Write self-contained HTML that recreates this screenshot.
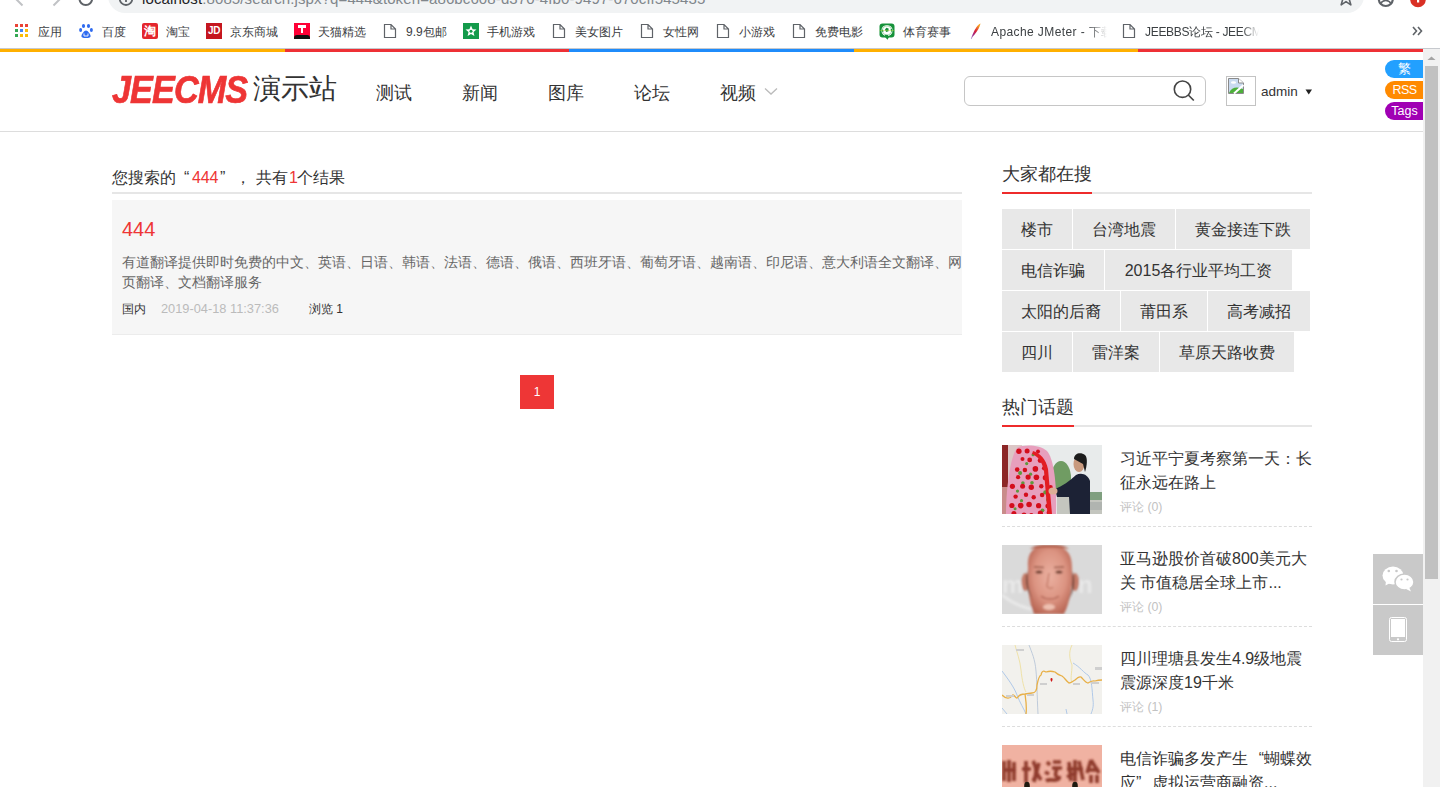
<!DOCTYPE html>
<html><head><meta charset="utf-8">
<style>
*{margin:0;padding:0;box-sizing:border-box}
html,body{width:1440px;height:787px;overflow:hidden;background:#fff}
body{position:relative;font-family:"Liberation Sans",sans-serif;color:#333}
.a{position:absolute;white-space:nowrap}
/* chrome */
#chrome{position:absolute;left:0;top:0;width:1440px;height:49px;background:#fff}
#addr{position:absolute;left:108px;top:-21px;width:1256px;height:34px;background:#f1f3f4;border-radius:17px}
#chromeline{position:absolute;left:0;top:48px;width:1440px;height:1px;background:#c6c9ce}
.bm{position:absolute;top:25px;white-space:nowrap;font-size:12px;line-height:14px;color:#3c4043}
.ic{position:absolute;top:23px;width:16px;height:16px}
/* color bar */
#cbar{position:absolute;left:0;top:49px;width:1423px;height:3px;display:flex}
#cbar div{flex:1}
/* header */
#hdrline{position:absolute;left:0;top:131px;width:1423px;height:1px;background:#ddd}
.nav{position:absolute;top:81px;font-size:18px;line-height:24px;color:#333}
/* scrollbar */
#sb{position:absolute;left:1423px;top:49px;width:17px;height:738px;background:#f1f1f1}
#thumb{position:absolute;left:2px;top:17px;width:13px;height:513px;background:#c1c1c1}
.tab{position:absolute;left:1385px;width:38px;height:18px;border-radius:9px 0 0 9px;color:#fff;font-size:12.5px;padding-left:1px;line-height:19.5px;text-align:center}
/* content */
.tag{position:absolute;height:40px;background:#e8e8e8;font-size:16px;line-height:41px;text-align:center;color:#333}
.news-t{position:absolute;left:1120px;width:194px;font-size:16px;line-height:24px;padding-top:2px;color:#333;white-space:normal}
.news-c{position:absolute;left:1120px;font-size:12.3px;line-height:17px;color:#c2c2c2}
.dash{position:absolute;left:1002px;width:310px;height:1px;border-top:1px dashed #ddd}
.fb{position:absolute;left:1373px;width:50px;height:50px;background:#c9c9c9}
</style></head><body>

<div id="chrome">
  <svg class="a" style="left:0;top:0" width="108" height="13">
    <path d="M15.5 -1.5 L22.5 5.5" stroke="#c0c2c5" stroke-width="2" fill="none"/>
    <path d="M53.5 5.5 L60 -1" stroke="#c0c2c5" stroke-width="2" fill="none"/>
    <circle cx="85.8" cy="-1.2" r="6.3" stroke="#5f6368" stroke-width="2" fill="none"/>
  </svg>
  <div id="addr"></div>
  <svg class="a" style="left:108px;top:0" width="40" height="13">
    <circle cx="18" cy="-1.3" r="6.3" stroke="#5f6368" stroke-width="1.8" fill="none"/>
    <rect x="17.1" y="-3" width="1.8" height="5" fill="#5f6368"/>
  </svg>
  <div class="a" style="left:142px;top:-10px;font-size:15px;line-height:18px;color:#80868b;letter-spacing:0.11px"><span style="color:#202124">localhost</span>:8085/search.jspx?q=444&amp;token=a86bc608-d370-4fb0-9497-670cff545435</div>
  <svg class="a" style="left:1330px;top:0" width="110" height="13">
    <path d="M16.00 -10.00 L18.00 -4.55 L23.80 -4.33 L19.23 -0.75 L20.82 4.83 L16.00 1.60 L11.18 4.83 L12.77 -0.75 L8.20 -4.33 L14.00 -4.55Z" stroke="#5f6368" stroke-width="1.6" fill="none" stroke-linejoin="round"/>
    <circle cx="55.8" cy="-1" r="7" stroke="#5f6368" stroke-width="2.2" fill="none"/><path d="M50.5 3.5 C52 1 54 0.5 55.8 0.5 C57.6 0.5 59.6 1 61.1 3.5" stroke="#5f6368" stroke-width="1.6" fill="none"/>
    <circle cx="88" cy="-0.5" r="7.8" fill="#d93025"/>
    <rect x="87" y="-4" width="2.2" height="6.5" fill="#fff"/>
  </svg>
  <div id="chromeline"></div>
</div>
<!-- bookmarks -->
<svg class="a" style="left:14px;top:23px" width="16" height="16">
 <rect x="1" y="1" width="3" height="3" fill="#ea4335"/><rect x="6" y="1" width="3" height="3" fill="#ea4335"/><rect x="11" y="1" width="3" height="3" fill="#ea4335"/>
 <rect x="1" y="6" width="3" height="3" fill="#34a853"/><rect x="6" y="6" width="3" height="3" fill="#4285f4"/><rect x="11" y="6" width="3" height="3" fill="#fbbc05"/>
 <rect x="1" y="11" width="3" height="3" fill="#34a853"/><rect x="6" y="11" width="3" height="3" fill="#fbbc05"/><rect x="11" y="11" width="3" height="3" fill="#fbbc05"/>
</svg>
<div class="bm" style="left:38px">应用</div>
<svg class="a" style="left:78px;top:23px" width="16" height="16">
 <ellipse cx="5.5" cy="3" rx="1.6" ry="2" fill="#2f6bf0"/><ellipse cx="10.5" cy="3" rx="1.6" ry="2" fill="#2f6bf0"/>
 <ellipse cx="2.6" cy="7" rx="1.5" ry="1.9" fill="#2f6bf0"/><ellipse cx="13.4" cy="7" rx="1.5" ry="1.9" fill="#2f6bf0"/>
 <path d="M8 7.5 C6 7.5 4 11 3.5 12.5 C3 14.5 5 15 8 15 C11 15 13 14.5 12.5 12.5 C12 11 10 7.5 8 7.5Z" fill="#2f6bf0"/>
 <path d="M6 10.5 V13 H10 V10.5" stroke="#fff" stroke-width="0.9" fill="none"/>
</svg>
<div class="bm" style="left:102px">百度</div>
<div class="a" style="left:142px;top:23px;width:16px;height:16px;background:#e4262d;border-radius:2px;color:#fff;font-size:12px;line-height:16px;text-align:center;font-weight:bold">淘</div>
<div class="bm" style="left:166px">淘宝</div>
<div class="a" style="left:206px;top:23px;width:16px;height:16px;background:#c5161f;color:#fff;font-size:10px;line-height:16px;text-align:center;font-weight:bold;letter-spacing:-0.5px">JD</div>
<div class="bm" style="left:230px">京东商城</div>
<div class="a" style="left:294px;top:23px;width:16px;height:16px;background:#ff0036;overflow:hidden">
 <div class="a" style="left:4px;top:2px;width:8px;height:2.5px;background:#fff"></div>
 <div class="a" style="left:6.8px;top:2px;width:2.5px;height:8px;background:#fff"></div>
 <div class="a" style="left:0;top:12px;width:16px;height:4px;background:#111;border-radius:3px 3px 0 0"></div>
</div>
<div class="bm" style="left:318px">天猫精选</div>
<svg class="a" style="left:382px;top:23px" width="16" height="16"><path d="M2.5 1.5 H9 L13.5 6 V14.5 H2.5 Z M9 1.5 V6 H13.5" stroke="#5f6368" stroke-width="1.2" fill="#fff" stroke-linejoin="miter"/></svg>
<div class="bm" style="left:406px">9.9包邮</div>
<svg class="a" style="left:463px;top:23px" width="16" height="16">
 <rect width="16" height="16" fill="#139a4a"/>
 <path d="M8 2.5 L9.6 6.2 L13.5 6.5 L10.5 9.1 L11.4 13 L8 11 L4.6 13 L5.5 9.1 L2.5 6.5 L6.4 6.2Z" fill="#fff"/>
 <circle cx="8" cy="8.2" r="1.5" fill="#139a4a"/>
</svg>
<div class="bm" style="left:487px">手机游戏</div>
<svg class="a" style="left:551px;top:23px" width="16" height="16"><path d="M2.5 1.5 H9 L13.5 6 V14.5 H2.5 Z M9 1.5 V6 H13.5" stroke="#5f6368" stroke-width="1.2" fill="#fff" stroke-linejoin="miter"/></svg>
<div class="bm" style="left:575px">美女图片</div>
<svg class="a" style="left:639px;top:23px" width="16" height="16"><path d="M2.5 1.5 H9 L13.5 6 V14.5 H2.5 Z M9 1.5 V6 H13.5" stroke="#5f6368" stroke-width="1.2" fill="#fff" stroke-linejoin="miter"/></svg>
<div class="bm" style="left:663px">女性网</div>
<svg class="a" style="left:715px;top:23px" width="16" height="16"><path d="M2.5 1.5 H9 L13.5 6 V14.5 H2.5 Z M9 1.5 V6 H13.5" stroke="#5f6368" stroke-width="1.2" fill="#fff" stroke-linejoin="miter"/></svg>
<div class="bm" style="left:739px">小游戏</div>
<svg class="a" style="left:791px;top:23px" width="16" height="16"><path d="M2.5 1.5 H9 L13.5 6 V14.5 H2.5 Z M9 1.5 V6 H13.5" stroke="#5f6368" stroke-width="1.2" fill="#fff" stroke-linejoin="miter"/></svg>
<div class="bm" style="left:815px">免费电影</div>
<svg class="a" style="left:879px;top:23px" width="16" height="18">
 <rect x="0.5" y="0.5" width="15" height="14" rx="3" fill="#16923a"/>
 <path d="M6 14 L8.5 16.8 L10 14Z" fill="#16923a"/>
 <circle cx="8" cy="7.5" r="5.6" fill="#fff"/>
 <circle cx="8" cy="7.5" r="4.6" fill="none" stroke="#5fb86e" stroke-width="0.6"/>
 <path d="M7.3 4.8 L9.6 5.6 L9.5 8.2 L7.2 8.9 L5.9 6.8Z" fill="#16923a"/>
 <path d="M2.8 7 L4.3 8.5 M12.2 6 L13 8.5 M6 12.4 L9 12.5" stroke="#16923a" stroke-width="1.2"/>
 <path d="M0.5 7.5 H15.5" stroke="#b8d838" stroke-width="0.6" opacity="0.7"/>
</svg>
<div class="bm" style="left:903px">体育赛事</div>
<svg class="a" style="left:967px;top:22px" width="16" height="18">
 <defs><linearGradient id="fth" x1="0" y1="1" x2="0.6" y2="0"><stop offset="0" stop-color="#b0a0d8"/><stop offset="0.3" stop-color="#9a2a8a"/><stop offset="0.6" stop-color="#d8203a"/><stop offset="1" stop-color="#f7a020"/></linearGradient></defs>
 <path d="M13.5 1.5 C11 2.5 8 7 6.5 10.5 C5.5 12.5 4.5 15 3.8 17 L4.5 17 C5.5 15 6.5 13.5 8 12 C10.5 9 12.8 5 13.5 1.5Z" fill="url(#fth)"/>
</svg>
<div class="bm" style="left:991px;width:116px;overflow:hidden;letter-spacing:0.4px;-webkit-mask-image:linear-gradient(to right,#000 85%,transparent)">Apache JMeter - 下载</div>
<svg class="a" style="left:1121px;top:23px" width="16" height="16"><path d="M2.5 1.5 H9 L13.5 6 V14.5 H2.5 Z M9 1.5 V6 H13.5" stroke="#5f6368" stroke-width="1.2" fill="#fff" stroke-linejoin="miter"/></svg>
<div class="bm" style="left:1145px;width:114px;overflow:hidden;letter-spacing:-0.3px;-webkit-mask-image:linear-gradient(to right,#000 85%,transparent)">JEEBBS论坛 - JEECMS</div>
<svg class="a" style="left:1410px;top:25px" width="14" height="12"><path d="M3 2 L6.5 6 L3 10 M8 2 L11.5 6 L8 10" stroke="#5f6368" stroke-width="1.6" fill="none"/></svg>

<div id="cbar"><div style="background:#ffb000"></div><div style="background:#ee3035"></div><div style="background:#1f8cfb"></div><div style="background:#ffb000"></div><div style="background:#ee3035"></div></div>

<!-- header -->
<div class="a" style="left:111.5px;top:68px;font-size:39px;line-height:44px;font-weight:bold;font-style:italic;color:#ee3535;letter-spacing:-1px;-webkit-text-stroke:0.7px #ee3535;transform:scaleX(0.875);transform-origin:0 0">JEECMS</div>
<div class="a" style="left:253px;top:72px;font-size:27.5px;line-height:34px;color:#333">演示站</div>
<div class="nav" style="left:376px">测试</div>
<div class="nav" style="left:462px">新闻</div>
<div class="nav" style="left:548px">图库</div>
<div class="nav" style="left:634px">论坛</div>
<div class="nav" style="left:720px">视频</div>
<svg class="a" style="left:764px;top:87px" width="14" height="9"><path d="M1 1.5 L7 7 L13 1.5" stroke="#bbb" stroke-width="1.3" fill="none"/></svg>
<div id="hdrline"></div>

<div class="a" style="left:964px;top:76px;width:242px;height:30px;border:1px solid #c6c6c6;border-radius:6px"></div>
<svg class="a" style="left:1172px;top:79px" width="26" height="26"><circle cx="10.5" cy="10.2" r="8.2" stroke="#444" stroke-width="1.6" fill="none"/><path d="M16.3 16 L21.8 21.5" stroke="#444" stroke-width="1.7"/></svg>
<div class="a" style="left:1226px;top:76px;width:30px;height:30px;border:1px solid #c3c3c3"></div>
<svg class="a" style="left:1228px;top:78px" width="16" height="16">
 <path d="M0.5 0.5 H10.5 L15.5 5 V15.5 H0.5 Z" fill="#c9daf0" stroke="#8a8a8a" stroke-width="1"/>
 <path d="M10.5 0.5 V5 H15.5" fill="#fff" stroke="#8a8a8a" stroke-width="1"/>
 <path d="M1 15 C3 10 8 8.5 12 10 L15 11 V15 Z" fill="#4caf3a"/>
 <path d="M6 15.5 L15.5 7" stroke="#fff" stroke-width="2"/>
 <ellipse cx="5.5" cy="4.5" rx="2.6" ry="1.3" fill="#fff"/>
</svg>
<svg class="a" style="left:1305px;top:89px" width="8" height="6"><path d="M0.5 0.5 H7 L3.75 5.5Z" fill="#222"/></svg>
<div class="a" style="left:1261px;top:84px;font-size:13.5px;line-height:16px;color:#333">admin</div>

<div class="tab" style="top:60px;background:#22a0ff">繁</div>
<div class="tab" style="top:81px;background:#ff8a00;letter-spacing:-0.5px">RSS</div>
<div class="tab" style="top:102px;background:#a000b4">Tags</div>

<!-- search results -->
<div class="a" style="left:112px;top:168px;font-size:16px;line-height:20px;color:#333">您搜索的</div>
<div class="a" style="left:184px;top:168px;font-size:16px;line-height:20px;color:#333">“</div>
<div class="a" style="left:192px;top:168px;font-size:16px;line-height:20px;color:#ee3535;letter-spacing:-0.1px">444</div>
<div class="a" style="left:220px;top:168px;font-size:16px;line-height:20px;color:#333">”</div>
<div class="a" style="left:235px;top:168px;font-size:16px;line-height:20px;color:#333">，</div>
<div class="a" style="left:256px;top:168px;font-size:16px;line-height:20px;color:#333">共有</div>
<div class="a" style="left:289px;top:168px;font-size:16px;line-height:20px;color:#ee3535">1</div>
<div class="a" style="left:297px;top:168px;font-size:16px;line-height:20px;color:#333">个结果</div>
<div class="a" style="left:112px;top:192px;width:850px;height:2px;background:#e6e6e6"></div>
<div class="a" style="left:112px;top:200px;width:850px;height:135px;background:#f6f6f6;border-bottom:1px solid #ececec"></div>
<div class="a" style="left:122px;top:217px;font-size:20px;line-height:24px;color:#ee3535">444</div>
<div class="a" style="left:122px;top:252px;width:840px;font-size:14px;line-height:20px;color:#666;white-space:normal;overflow:hidden;height:40px">有道翻译提供即时免费的中文、英语、日语、韩语、法语、德语、俄语、西班牙语、葡萄牙语、越南语、印尼语、意大利语全文翻译、网页翻译、文档翻译服务</div>
<div class="a" style="left:122px;top:301px;font-size:12px;line-height:16px;color:#333">国内</div>
<div class="a" style="left:161px;top:301px;font-size:12.8px;line-height:16px;color:#bbb">2019-04-18 11:37:36</div>
<div class="a" style="left:309px;top:301px;font-size:12px;line-height:16px;color:#333">浏览 1</div>

<div class="a" style="left:520px;top:375px;width:34px;height:34px;background:#ee3636;color:#fff;font-size:12px;line-height:34px;text-align:center">1</div>

<!-- sidebar -->
<div class="a" style="left:1002px;top:163px;font-size:18px;line-height:22px;color:#333">大家都在搜</div>
<div class="a" style="left:1002px;top:192px;width:310px;height:2px;background:#e6e6e6"></div>
<div class="a" style="left:1002px;top:192px;width:90px;height:2px;background:#ee2b2b"></div>

<div class="tag" style="left:1002px;top:209px;width:70px">楼市</div>
<div class="tag" style="left:1073px;top:209px;width:102px">台湾地震</div>
<div class="tag" style="left:1176px;top:209px;width:134px">黄金接连下跌</div>
<div class="tag" style="left:1002px;top:250px;width:102px">电信诈骗</div>
<div class="tag" style="left:1105px;top:250px;width:187px">2015各行业平均工资</div>
<div class="tag" style="left:1002px;top:291px;width:118px">太阳的后裔</div>
<div class="tag" style="left:1121px;top:291px;width:86px">莆田系</div>
<div class="tag" style="left:1208px;top:291px;width:102px">高考减招</div>
<div class="tag" style="left:1002px;top:332px;width:70px">四川</div>
<div class="tag" style="left:1073px;top:332px;width:86px">雷洋案</div>
<div class="tag" style="left:1160px;top:332px;width:134px">草原天路收费</div>

<div class="a" style="left:1002px;top:396px;font-size:18px;line-height:22px;color:#333">热门话题</div>
<div class="a" style="left:1002px;top:425px;width:310px;height:2px;background:#e6e6e6"></div>
<div class="a" style="left:1002px;top:425px;width:72px;height:2px;background:#ee2b2b"></div>

<svg class="a" style="left:1002px;top:445px" width="100" height="69" viewBox="0 0 100 69">
 <defs><filter id="bl1" x="-10%" y="-10%" width="120%" height="120%"><feGaussianBlur stdDeviation="0.7"/></filter></defs>
 <rect width="100" height="69" fill="#e8ebeb"/>
 <g filter="url(#bl1)">
 <rect x="0" y="0" width="6" height="42" fill="#8c2626"/>
 <rect x="6" y="0" width="14" height="69" fill="#dcc6c6"/>
 <rect x="0" y="42" width="12" height="27" fill="#c98c8a"/>
 <rect x="55" y="50" width="45" height="19" fill="#c4c6bf"/>
 <rect x="88" y="47" width="12" height="8" fill="#7f9f7f"/>
 <rect x="88" y="57" width="12" height="8" fill="#b0b4b0"/>
 <ellipse cx="59" cy="33" rx="10" ry="17" fill="#6f9c64"/>
 <path d="M15 3 C22 -1 38 0 45 6 C52 14 55 40 54 69 L4 69 C4 45 8 12 15 3Z" fill="#e79fbd"/>
 <clipPath id="wr"><path d="M15 3 C22 -1 38 0 45 6 C52 14 55 40 54 69 L4 69 C4 45 8 12 15 3Z"/></clipPath>
 <g clip-path="url(#wr)">
 <circle cx="16.9" cy="6.2" r="2.7" fill="#d4101e"/>
 <circle cx="25.1" cy="6.0" r="2.5" fill="#d4101e"/>
 <circle cx="31.1" cy="9.7" r="1.6" fill="#5d9a3c"/>
 <circle cx="36.0" cy="6.6" r="2.0" fill="#d4101e"/>
 <circle cx="20.5" cy="14.0" r="2.0" fill="#d4101e"/>
 <circle cx="24.7" cy="18.6" r="1.6" fill="#5d9a3c"/>
 <circle cx="27.7" cy="14.9" r="2.4" fill="#d4101e"/>
 <circle cx="38.1" cy="15.5" r="2.4" fill="#d4101e"/>
 <circle cx="15.2" cy="24.6" r="2.3" fill="#d4101e"/>
 <circle cx="18.1" cy="28.1" r="2.0" fill="#5d9a3c"/>
 <circle cx="22.9" cy="25.0" r="2.3" fill="#d4101e"/>
 <circle cx="28.6" cy="29.2" r="1.6" fill="#5d9a3c"/>
 <circle cx="33.4" cy="23.9" r="2.8" fill="#d4101e"/>
 <circle cx="42.0" cy="23.3" r="2.1" fill="#d4101e"/>
 <circle cx="16.1" cy="32.2" r="2.1" fill="#d4101e"/>
 <circle cx="20.9" cy="38.1" r="1.8" fill="#5d9a3c"/>
 <circle cx="26.1" cy="32.1" r="2.6" fill="#d4101e"/>
 <circle cx="30.0" cy="37.8" r="1.8" fill="#5d9a3c"/>
 <circle cx="34.4" cy="32.3" r="2.8" fill="#d4101e"/>
 <circle cx="43.4" cy="32.7" r="2.7" fill="#d4101e"/>
 <circle cx="10.4" cy="41.3" r="2.6" fill="#d4101e"/>
 <circle cx="15.5" cy="46.1" r="1.6" fill="#5d9a3c"/>
 <circle cx="20.6" cy="41.2" r="2.5" fill="#d4101e"/>
 <circle cx="29.3" cy="42.2" r="2.7" fill="#d4101e"/>
 <circle cx="39.3" cy="41.2" r="2.2" fill="#d4101e"/>
 <circle cx="43.3" cy="47.4" r="2.1" fill="#5d9a3c"/>
 <circle cx="48.5" cy="42.3" r="2.3" fill="#d4101e"/>
 <circle cx="13.6" cy="51.6" r="2.2" fill="#d4101e"/>
 <circle cx="19.5" cy="55.7" r="1.6" fill="#5d9a3c"/>
 <circle cx="24.0" cy="49.7" r="2.2" fill="#d4101e"/>
 <circle cx="31.7" cy="52.3" r="2.2" fill="#d4101e"/>
 <circle cx="40.1" cy="50.0" r="2.3" fill="#d4101e"/>
 <circle cx="46.0" cy="54.8" r="2.0" fill="#5d9a3c"/>
 <circle cx="9.9" cy="60.5" r="2.6" fill="#d4101e"/>
 <circle cx="13.1" cy="63.8" r="1.5" fill="#5d9a3c"/>
 <circle cx="18.7" cy="60.6" r="2.8" fill="#d4101e"/>
 <circle cx="27.1" cy="59.5" r="2.8" fill="#d4101e"/>
 <circle cx="36.6" cy="60.7" r="2.6" fill="#d4101e"/>
 <circle cx="40.5" cy="65.3" r="1.9" fill="#5d9a3c"/>
 <circle cx="45.6" cy="61.1" r="2.3" fill="#d4101e"/>
 <circle cx="11.9" cy="68.6" r="2.5" fill="#d4101e"/>
 <circle cx="22.0" cy="70.1" r="2.6" fill="#d4101e"/>
 <circle cx="29.3" cy="70.0" r="2.1" fill="#d4101e"/>
 <circle cx="38.4" cy="68.2" r="2.6" fill="#d4101e"/>
 <circle cx="46.8" cy="67.5" r="2.2" fill="#d4101e"/>
 <circle cx="52.4" cy="72.9" r="2.0" fill="#5d9a3c"/>
 </g>
 <path d="M31 6 C38 8 44 14 46 24 L50 69 L45.5 69 L42 26 C40 17 37 12 30 9Z" fill="#e21c24"/>
 <path d="M53 44 C60 41 68 36 74 30 C80 27 86 30 88 36 L88 69 L68 69 L67 52 L55 52Z" fill="#1b2236"/>
 <ellipse cx="51" cy="46" rx="4.5" ry="3.5" fill="#dcae96"/>
 <ellipse cx="77" cy="19" rx="5.5" ry="8" fill="#c99a7e"/>
 <path d="M72 14 C72 8 79 7 83 10 C86 13 85 21 83 27 L81 19 C78 17 75 16 72 14Z" fill="#1f1f1f"/>
 </g>
</svg>
<div class="news-t" style="top:445px">习近平宁夏考察第一天：长征永远在路上</div>
<div class="news-c" style="top:499px">评论 (0)</div>
<div class="dash" style="top:526px"></div>

<svg class="a" style="left:1002px;top:545px" width="100" height="69" viewBox="0 0 100 69">
 <defs><filter id="bl2" x="-10%" y="-10%" width="120%" height="120%"><feGaussianBlur stdDeviation="1.1"/></filter>
 <radialGradient id="face" cx="0.5" cy="0.45" r="0.6"><stop offset="0" stop-color="#eab0a0"/><stop offset="0.6" stop-color="#dc9482"/><stop offset="1" stop-color="#b86654"/></radialGradient></defs>
 <rect width="100" height="69" fill="#dadada"/>
 <g filter="url(#bl2)">
 <path d="M0 50 C15 62 35 68 55 66" stroke="#e8e8e8" stroke-width="3" fill="none"/>
 <text x="0" y="48" font-family="Liberation Sans" font-size="24" font-weight="bold" fill="#e8e8e8">m</text>
 <text x="76" y="48" font-family="Liberation Sans" font-size="24" font-weight="bold" fill="#e8e8e8">n</text>
 <ellipse cx="23.5" cy="37" rx="4" ry="9" fill="#c47a68"/>
 <ellipse cx="73" cy="37" rx="4" ry="9" fill="#c47a68"/>
 <path d="M26 22 C25 6 33 0 47 0 C61 0 70 6 70 22 C71 40 68 58 62 69 L32 69 C27 58 25 40 26 22Z" fill="url(#face)"/>
 <path d="M28 4 C32 0 40 0 47 0 C55 0 63 0 67 4 C60 2 36 2 28 4Z" fill="#b05a44"/>
 <path d="M26 26 C24 36 27 48 31 56 L28 50 C24 42 23 32 26 26Z" fill="#4a2c24"/>
 <path d="M70 26 C72 36 70 48 66 56 L69 50 C73 42 73 32 70 26Z" fill="#4a2c24"/>
 <ellipse cx="37" cy="27" rx="3.5" ry="1.6" fill="#6b3a2c"/>
 <ellipse cx="57" cy="27" rx="3.5" ry="1.6" fill="#6b3a2c"/>
 <path d="M32 22 L42 22.5 M52 22.5 L62 22" stroke="#9a5a48" stroke-width="1.3"/>
 <path d="M47 28 L45 41 C46 44 50 44 51 42" stroke="#c67c6a" stroke-width="1.5" fill="none"/>
 <path d="M39 51 C44 55 52 55 57 51" stroke="#b56a5a" stroke-width="1.6" fill="none"/>
 <ellipse cx="47" cy="62" rx="6" ry="3" fill="#eec0b0"/>
 </g>
</svg>
<div class="news-t" style="top:545px">亚马逊股价首破800美元大关 市值稳居全球上市...</div>
<div class="news-c" style="top:599px">评论 (0)</div>
<div class="dash" style="top:626px"></div>

<svg class="a" style="left:1002px;top:645px" width="100" height="69" viewBox="0 0 100 69">
 <rect width="100" height="69" fill="#f2f1ed"/>
 <path d="M13 0 C15 8 18 15 19 25 C20 35 22 44 24 47" stroke="#efe2a8" stroke-width="1" fill="none"/>
 <path d="M70 0 C66 8 68 15 70 20 C70 28 68 34 70 38" stroke="#efe2a8" stroke-width="1" fill="none"/>
 <path d="M27 0 C30 8 33 14 34 26 C35 36 35 50 36 69" stroke="#b9c6d8" stroke-width="0.9" fill="none"/>
 <path d="M0 26 C6 34 12 42 15 50 C18 58 22 64 24 69" stroke="#a8c4e8" stroke-width="0.9" fill="none"/>
 <path d="M71 18 C78 22 82 28 86 30 C90 34 90 45 91 55 C92 62 90 66 89 69" stroke="#a8c4e8" stroke-width="0.9" fill="none"/>
 <path d="M0 63 L5 69" stroke="#a8c4e8" stroke-width="0.9"/>
 <path d="M64 64 L65 69" stroke="#a8c4e8" stroke-width="0.9"/>
 <path d="M0 50 C4 54 8 54 10 51 C12 47 14 56 16 52 C18 49 20 49 23 49 L30 48 C34 48 35 45 35 40 C36 35 37 31 39 30 C40 25 42 26 44 27 C47 26 50 26 53 27 C56 30 58 30 60 31 C63 33 64 36 67 38 C69 38 71 36 73 35 C75 33 77 31 79 32 C82 35 84 38 86 38 C88 37 90 35 93 36 C96 35 98 35 100 35" stroke="#e8b048" stroke-width="1.3" fill="none"/>
 <path d="M23 49 C24 56 25 62 24 69" stroke="#e8b048" stroke-width="1.3" fill="none"/>
 <path d="M49.5 33 C48.2 33 48 34.8 49.5 37 C51 34.8 50.8 33 49.5 33Z" fill="#d01818"/>
 <rect x="38" y="38" width="7" height="2" fill="#cfcfcf"/><rect x="71" y="38" width="7" height="2" fill="#cfcfcf"/><rect x="25" y="49" width="7" height="2" fill="#cfcfcf"/>
 <rect x="4" y="50" width="8" height="2" fill="#cfcfcf"/><rect x="14" y="4" width="8" height="2" fill="#cfcfcf"/><rect x="93" y="22" width="7" height="3" fill="#cfcfcf"/><rect x="89" y="37" width="8" height="2" fill="#cfcfcf"/>
</svg>
<div class="news-t" style="top:645px">四川理塘县发生4.9级地震震源深度19千米</div>
<div class="news-c" style="top:699px">评论 (1)</div>
<div class="dash" style="top:726px"></div>

<svg class="a" style="left:1002px;top:745px" width="100" height="69" viewBox="0 0 100 69">
 <defs><filter id="bl4" x="-10%" y="-10%" width="120%" height="120%"><feGaussianBlur stdDeviation="1.3"/></filter></defs>
 <rect width="100" height="69" fill="#f0b2a2"/>
 <g filter="url(#bl4)" fill="none" stroke="#8a3626" stroke-width="3.6" opacity="0.95">
  <path d="M2 16 V36 M7 15 V37 M2 25 H14 M12 17 V36"/>
  <path d="M24 16 V38 M20 24 H29 M31 16 C35 23 35 30 31 36 M37 18 L32 37 M34 27 L39 35"/>
  <path d="M45 17 L48 20 M43 27 L47 29 M44 36 C48 33 52 37 57 34 M51 17 H59 M50 23 H60 M55 23 C53 30 52 32 59 33"/>
  <path d="M67 17 L69 36 M73 15 V37 M65 24 H81 M77 16 L81 35 M65 32 L75 27"/>
  <path d="M89 15 L85 28 M89 15 L97 28 M87 25 H97 M89 30 V38 M95 30 V38"/>
 </g>
 <ellipse cx="25" cy="41" rx="2.8" ry="4.2" fill="#1e1a10"/>
 <ellipse cx="73" cy="41" rx="2.8" ry="4.2" fill="#1e1a10"/>
 <path d="M23 45 L27 45 L26 48 L24 48Z" fill="#c8a030"/><path d="M71 45 L75 45 L74 48 L72 48Z" fill="#c8a030"/>
</svg>
<div class="news-t" style="top:745px">电信诈骗多发产生<span style="display:inline-block;width:16px;text-align:right">“</span>蝴蝶效应<span style="display:inline-block;width:16px;text-align:left">”</span>虚拟运营商融资...</div>

<div class="fb" style="top:554px"><svg class="a" style="left:0;top:0" width="50" height="50">
 <ellipse cx="20" cy="21.5" rx="10.5" ry="9" fill="#fff"/>
 <path d="M13 26.5 L12.5 31.5 L18 28.5Z" fill="#fff"/>
 <ellipse cx="31.5" cy="28" rx="9.5" ry="8" stroke="#c9c9c9" stroke-width="1.5" fill="#fff"/>
 <path d="M36 33 L38 37.5 L33 35Z" fill="#fff"/>
 <circle cx="15.8" cy="17" r="1.3" fill="#c9c9c9"/><circle cx="23.5" cy="17" r="1.3" fill="#c9c9c9"/>
 <circle cx="28.5" cy="25.5" r="1.1" fill="#c9c9c9"/><circle cx="34.5" cy="25.5" r="1.1" fill="#c9c9c9"/>
</svg></div>
<div class="fb" style="top:605px"><svg class="a" style="left:0;top:0" width="50" height="50">
 <rect x="16.5" y="12.5" width="17" height="24" rx="2" stroke="#fff" stroke-width="1" fill="none"/>
 <rect x="18" y="14" width="14" height="18" fill="#fff"/>
 <circle cx="25" cy="34.3" r="1.1" fill="#fff"/>
</svg></div>

<div id="sb"><svg class="a" style="left:0;top:0" width="17" height="17"><path d="M4.5 11 L8.5 7.5 L12.5 11Z" fill="#a3a3a3"/></svg><div id="thumb"></div></div>
</body></html>
